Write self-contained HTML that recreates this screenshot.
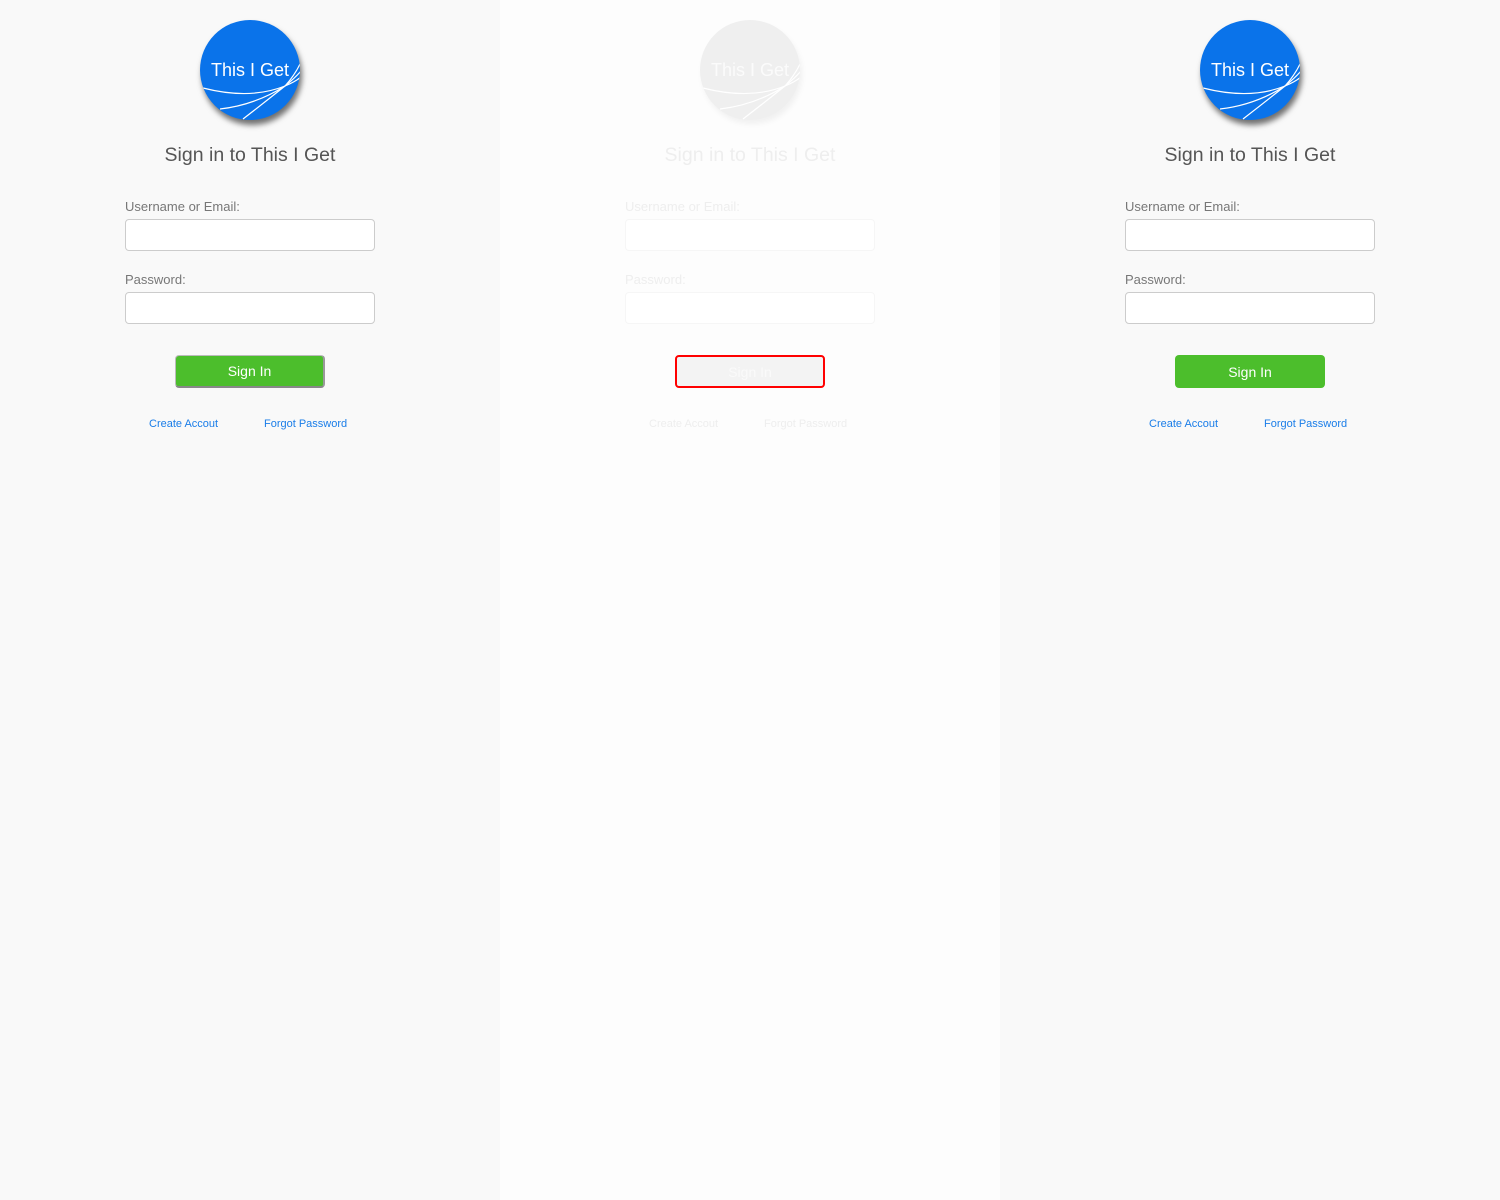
<!DOCTYPE html>
<html><head><meta charset="utf-8"><style>
*{margin:0;padding:0;box-sizing:border-box}
body{width:1500px;height:1200px;overflow:hidden;font-family:"Liberation Sans",sans-serif;background:#f9f9f9;position:relative}
.p{position:absolute;top:0;width:500px;height:1200px;background:#f9f9f9}
.p.m{background:#fdfdfd}
.logo{position:absolute;left:200px;top:20px;width:100px;height:100px;border-radius:50%;background:#0a73ea;box-shadow:2px 5px 6px rgba(0,0,0,.55)}
.m .logo{background:#efefef;box-shadow:2px 4px 6px rgba(0,0,0,.05)}
.logo svg{position:absolute;left:0;top:0}
.logo span{position:absolute;left:0;width:100px;top:40px;text-align:center;color:#fff;font-size:18px}
.m .logo span{color:#fbfbfb}
.t{position:absolute;left:0;width:500px;top:144px;text-align:center;font-size:19.5px;color:#555}
.m .t{color:#eee}
.l{position:absolute;left:125px;font-size:13px;color:#777}
.m .l{color:#eee}
.i{position:absolute;left:125px;width:250px;height:32px;background:#fff;border:1px solid #ccc;border-radius:4px}
.m .i{border-color:#f6f6f6}
.b{position:absolute;left:175px;top:355px;width:150px;height:33px;background:#4cbe2c;border-radius:4px;color:#fff;font-size:14px;text-align:center;line-height:34px}
.p1 .b{border:1px solid #bbb;border-bottom:2px solid #888;border-right:2px solid #999;line-height:31px}
.m .b{background:#f3f3f3;border:2px solid #f00;color:#fafafa;line-height:30px}
.a{position:absolute;top:418px;font-size:11px;color:#1a7de8}
.m .a{color:#eee}
</style></head><body>
<div class="p p1" style="left:0">
<div class="logo"><svg width="100" height="100"><defs><clipPath id="c1"><circle cx="50" cy="50" r="50"/></clipPath></defs><g clip-path="url(#c1)" fill="none" stroke="#fff" stroke-width="1.2"><path d="M3,68 Q50,80 85,66 Q95,55 101,42"/><path d="M20,89 Q55,85 85,66 Q95,58 101,51"/><path d="M43,99 Q65,82 85,66 Q95,62 101,57"/></g></svg><span>This I Get</span></div>
<div class="t">Sign in to This I Get</div>
<div class="l" style="top:199px">Username or Email:</div><div class="i" style="top:219px"></div>
<div class="l" style="top:272px">Password:</div><div class="i" style="top:292px"></div>
<div class="b">Sign In</div>
<div class="a" style="left:149px">Create Accout</div><div class="a" style="left:264px">Forgot Password</div>
</div>
<div class="p m" style="left:500px">
<div class="logo"><svg width="100" height="100"><defs><clipPath id="c2"><circle cx="50" cy="50" r="50"/></clipPath></defs><g clip-path="url(#c2)" fill="none" stroke="#fff" stroke-width="1.2"><path d="M3,68 Q50,80 85,66 Q95,55 101,42"/><path d="M20,89 Q55,85 85,66 Q95,58 101,51"/><path d="M43,99 Q65,82 85,66 Q95,62 101,57"/></g></svg><span>This I Get</span></div>
<div class="t">Sign in to This I Get</div>
<div class="l" style="top:199px">Username or Email:</div><div class="i" style="top:219px"></div>
<div class="l" style="top:272px">Password:</div><div class="i" style="top:292px"></div>
<div class="b">Sign In</div>
<div class="a" style="left:149px">Create Accout</div><div class="a" style="left:264px">Forgot Password</div>
</div>
<div class="p" style="left:1000px">
<div class="logo"><svg width="100" height="100"><defs><clipPath id="c3"><circle cx="50" cy="50" r="50"/></clipPath></defs><g clip-path="url(#c3)" fill="none" stroke="#fff" stroke-width="1.2"><path d="M3,68 Q50,80 85,66 Q95,55 101,42"/><path d="M20,89 Q55,85 85,66 Q95,58 101,51"/><path d="M43,99 Q65,82 85,66 Q95,62 101,57"/></g></svg><span>This I Get</span></div>
<div class="t">Sign in to This I Get</div>
<div class="l" style="top:199px">Username or Email:</div><div class="i" style="top:219px"></div>
<div class="l" style="top:272px">Password:</div><div class="i" style="top:292px"></div>
<div class="b">Sign In</div>
<div class="a" style="left:149px">Create Accout</div><div class="a" style="left:264px">Forgot Password</div>
</div>
</body></html>
